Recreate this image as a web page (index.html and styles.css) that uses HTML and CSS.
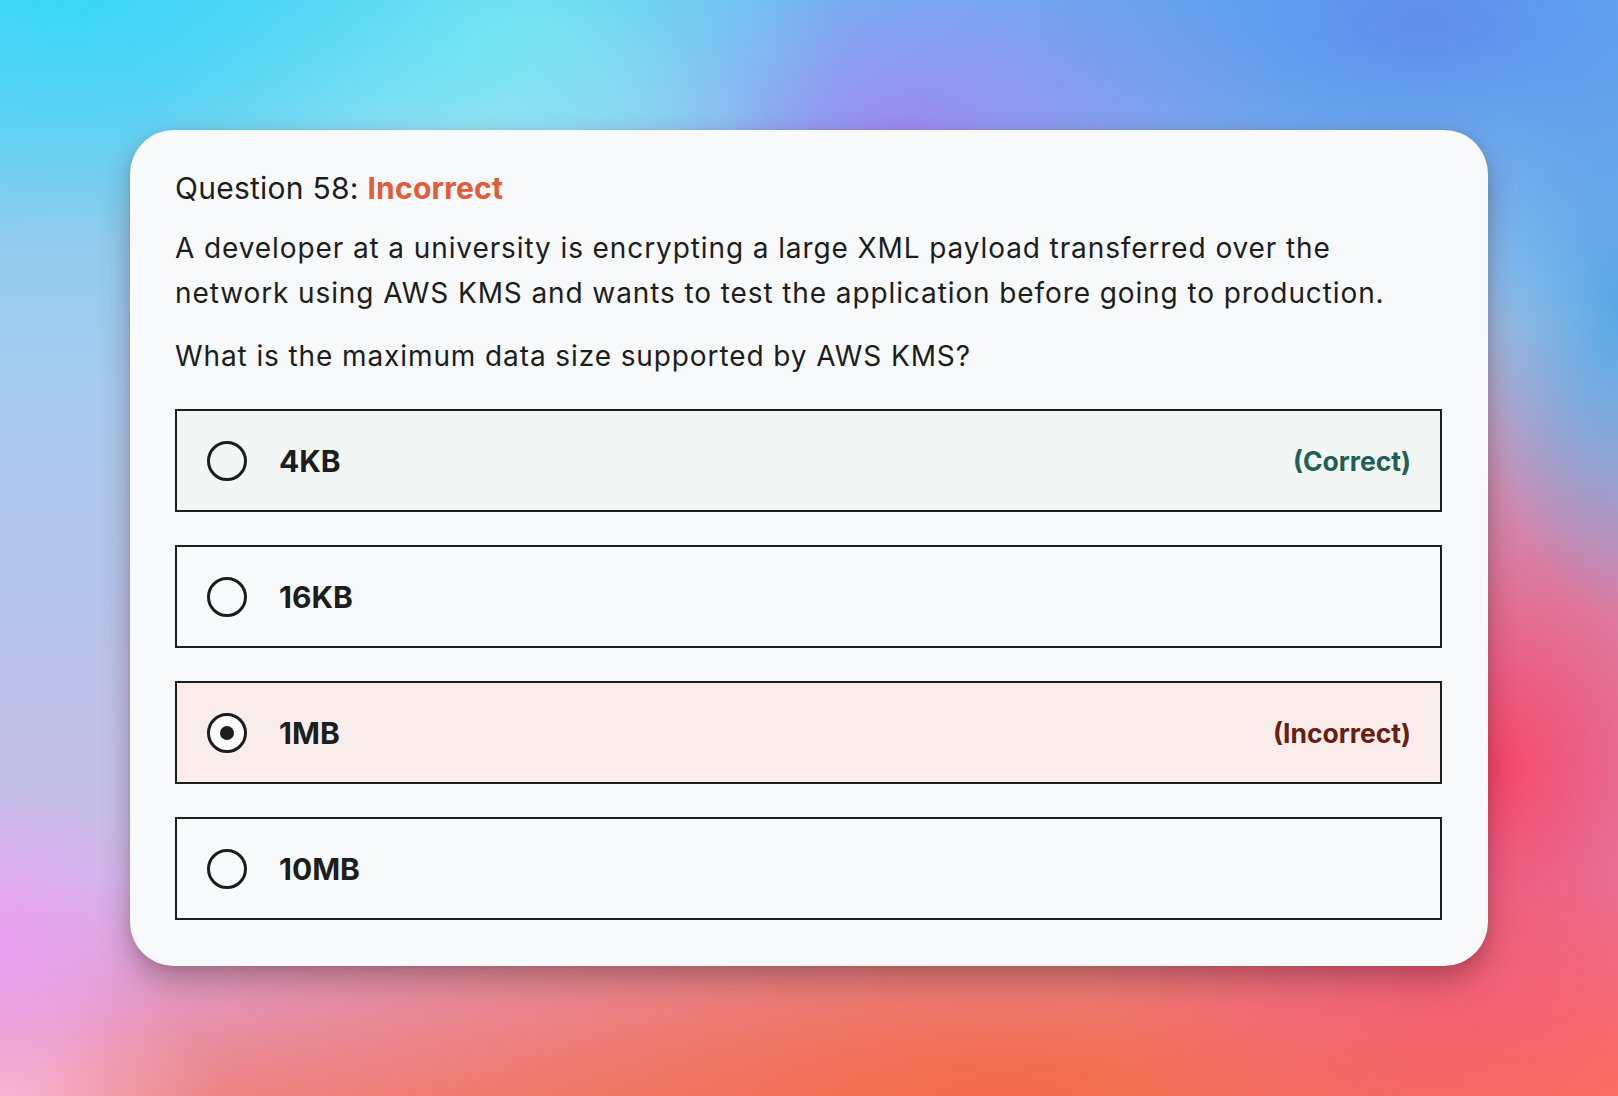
FILE: index.html
```html
<!DOCTYPE html>
<html lang="en">
<head>
<meta charset="utf-8">
<title>Question 58</title>
<link rel="stylesheet" href="styles.css">
</head>
<body>
<div class="page">
  <section class="card">
    <h2 class="title">Question 58: <span class="status">Incorrect</span></h2>
    <p class="prompt">A developer at a university is encrypting a large XML payload transferred over the network using AWS KMS and wants to test the application before going to production.</p>
    <p class="ask">What is the maximum data size supported by AWS KMS?</p>
    <div class="options">
      <div class="option correct">
        <span class="radio"></span>
        <span class="text">4KB</span>
        <span class="label label-correct">(Correct)</span>
      </div>
      <div class="option">
        <span class="radio"></span>
        <span class="text">16KB</span>
      </div>
      <div class="option incorrect">
        <span class="radio checked"></span>
        <span class="text">1MB</span>
        <span class="label label-incorrect">(Incorrect)</span>
      </div>
      <div class="option">
        <span class="radio"></span>
        <span class="text">10MB</span>
      </div>
    </div>
  </section>
</div>
</body>
</html>
```
FILE: styles.css
```css
html, body {
  margin: 0;
  padding: 0;
}
body {
  width: 1618px;
  height: 1096px;
  overflow: hidden;
  font-family: Inter, "Liberation Sans", Arial, sans-serif;
  color: #1c1d1f;
  background:
    radial-gradient(ellipse 30% 22% at 4% 0%, rgba(58,216,248,0.95), rgba(58,216,248,0) 100%),
    radial-gradient(ellipse 22% 20% at 30% 4%, rgba(120,232,242,0.9), rgba(120,232,242,0) 100%),
    radial-gradient(ellipse 20% 16% at 28% 14%, rgba(190,222,245,0.9), rgba(190,222,245,0) 100%),
    radial-gradient(ellipse 24% 22% at 56% 12%, rgba(156,136,242,0.95), rgba(156,136,242,0) 100%),
    radial-gradient(ellipse 40% 28% at 88% 2%, rgba(95,142,236,1), rgba(95,142,236,0) 100%),
    radial-gradient(ellipse 9% 28% at 100% 28%, rgba(90,168,230,1), rgba(90,168,230,0) 100%),
    radial-gradient(ellipse 28% 45% at 92% 70%, rgba(247,70,106,1), rgba(247,70,106,0) 100%),
    radial-gradient(ellipse 60% 30% at 62% 100%, rgba(243,106,72,1), rgba(243,106,72,0) 100%),
    radial-gradient(ellipse 20% 20% at 100% 100%, rgba(255,136,110,1), rgba(255,136,110,0) 100%),
    radial-gradient(ellipse 12% 14% at 0% 86%, rgba(236,160,244,0.95), rgba(236,160,244,0) 100%),
    radial-gradient(ellipse 14% 12% at 0% 100%, rgba(248,182,214,1), rgba(248,182,214,0) 100%),
    linear-gradient(180deg, #5fcbf2 0%, #86cdef 15%, #a6cbee 35%, #bcc3ea 60%, #cbbde8 80%, #e49ac4 92%, #ec8a90 100%);
}
.page {
  padding: 130px;
}
.card {
  background: #f7f9fa;
  border-radius: 44px;
  padding: 38px 46px 46px 45px;
  box-shadow: 0 14px 30px rgba(70, 20, 30, 0.35), 0 2px 8px rgba(0, 0, 0, 0.08);
}
.title {
  margin: 0;
  font-size: 30px;
  line-height: 40px;
  font-weight: 400;
  letter-spacing: 0.25px;
}
.status {
  color: #e35b3b;
  font-weight: 700;
}
.prompt {
  margin: 18px 0 0;
  max-width: 1252px;
  font-size: 28px;
  line-height: 45px;
  letter-spacing: 0.9px;
}
.ask {
  margin: 18px 0 0;
  font-size: 28px;
  line-height: 45px;
  letter-spacing: 0.9px;
}
.options {
  margin-top: 30px;
  display: flex;
  flex-direction: column;
  gap: 33px;
}
.option {
  height: 99px;
  border: 2px solid #1c1d1f;
  display: flex;
  align-items: center;
  padding: 0 29px 0 30px;
  background: #f7f9fa;
}
.option.correct {
  background: #f2f6f4;
}
.option.incorrect {
  background: #fbecec;
}
.radio {
  width: 34px;
  height: 34px;
  border: 3px solid #1c1d1f;
  border-radius: 50%;
  flex: none;
  display: flex;
  align-items: center;
  justify-content: center;
}
.radio.checked {
  background: #ffffff;
}
.radio.checked::after {
  content: "";
  width: 14px;
  height: 14px;
  border-radius: 50%;
  background: #1c1d1f;
}
.text {
  margin-left: 32px;
  font-size: 30px;
  font-weight: 700;
  flex: 1;
}
.label {
  font-size: 26.5px;
  font-weight: 700;
}
.label-correct {
  color: #1e6055;
}
.label-incorrect {
  color: #67200f;
}
```
